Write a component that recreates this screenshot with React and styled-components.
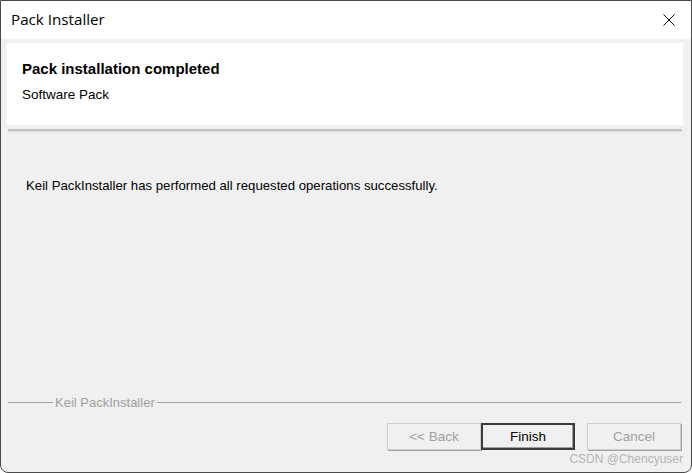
import React from "react";
import styled, { createGlobalStyle } from "styled-components";

const GlobalStyle = createGlobalStyle`
    html, body {
        margin: 0;
        padding: 0;
        background: #ffffff;
    }
    * {
        box-sizing: border-box;
    }
`

function App() {
    return (
        <>
            <GlobalStyle />
            <Window>
                <TitleBar>
                    <Title>Pack Installer</Title>
                    <CloseButton aria-label="close">
                        <svg width="12" height="12" viewBox="0 0 12 12">
                            <path d="M0.5 0.5 L11.5 11.5 M11.5 0.5 L0.5 11.5" stroke="#111" strokeWidth="1" fill="none" />
                        </svg>
                    </CloseButton>
                </TitleBar>
                <Body>
                    <HeaderPanel>
                        <HeaderTitle>Pack installation completed</HeaderTitle>
                        <HeaderSub>Software Pack</HeaderSub>
                    </HeaderPanel>
                    <Separator />
                    <Message>Keil PackInstaller has performed all requested operations successfully.</Message>
                    <Spacer />
                    <GroupLine>
                        <LineStub />
                        <GroupLabel>Keil PackInstaller</GroupLabel>
                        <LineRest />
                    </GroupLine>
                    <ButtonRow>
                        <WizardButton disabled>&lt;&lt; Back</WizardButton>
                        <WizardButton $default>Finish</WizardButton>
                        <WizardButton disabled $gap>Cancel</WizardButton>
                    </ButtonRow>
                    <Watermark>CSDN @Chencyuser</Watermark>
                </Body>
            </Window>
        </>
    )
}

const Window = styled.div`
    width: 692px;
    height: 473px;
    display: flex;
    flex-direction: column;
    border: 1px solid #4a4a4a;
    border-radius: 0 0 8px 8px;
    background: #f0f0f0;
    overflow: hidden;
`

const TitleBar = styled.div`
    height: 38px;
    flex: none;
    display: flex;
    align-items: center;
    justify-content: space-between;
    background: #ffffff;
    padding: 0 16px 0 10px;
`

const Title = styled.div`
    font-family: "Open Sans", "Noto Sans", sans-serif;
    font-size: 15.2px;
    color: #000;
    margin-top: -2px;
`

const CloseButton = styled.div`
    width: 12px;
    height: 12px;
    display: flex;
    margin-top: -1px;
`

const Body = styled.div`
    flex: 1;
    display: flex;
    flex-direction: column;
    padding: 4px 8px 6px 6px;
    font-family: "Liberation Sans", Arial, sans-serif;
`

const HeaderPanel = styled.div`
    height: 82px;
    background: #ffffff;
    padding: 17px 0 0 15px;
`

const HeaderTitle = styled.div`
    font-size: 15px;
    font-weight: bold;
    color: #000;
`

const HeaderSub = styled.div`
    font-size: 13.5px;
    color: #000;
    margin-top: 10px;
`

const Separator = styled.div`
    height: 3px;
    margin: 4px 1px 0 1px;
    background: #c4c4c4;
    border-bottom: 1px solid #dcdcdc;
`

const Message = styled.div`
    font-size: 13.2px;
    color: #000;
    margin: 46px 0 0 19px;
`

const Spacer = styled.div`
    flex: 1;
`

const GroupLine = styled.div`
    display: flex;
    align-items: center;
    height: 16px;
    margin: 0 2px 0 1px;
`

const LineStub = styled.div`
    width: 45px;
    height: 1px;
    background: #a0a0a0;
`

const LineRest = styled.div`
    flex: 1;
    height: 1px;
    background: #a0a0a0;
`

const GroupLabel = styled.div`
    font-size: 13px;
    color: #a0a0a0;
    padding: 0 2px;
`

const ButtonRow = styled.div`
    display: flex;
    justify-content: flex-end;
    margin: 13px 2px 0 0;
`

const WizardButton = styled.div`
    width: 94px;
    height: 27px;
    display: flex;
    align-items: center;
    justify-content: center;
    font-size: 13.5px;
    background: #f0f0f0;
    color: ${p => (p.disabled ? "#a0a0a0" : "#000")};
    margin-left: ${p => (p.$gap ? "12px" : "0")};
    border: ${p => (p.$default ? "2px solid #3c3c3c" : "1px solid #cfcfcf")};
    box-shadow: ${p => (p.$default ? "inset -1px -1px 0 #a0a0a0" : "1px 1px 0 #a0a0a0")};
`

const Watermark = styled.div`
    align-self: flex-end;
    font-size: 12px;
    color: #b4b4b4;
    margin: 2px 0 0 0;
`

export default App;
